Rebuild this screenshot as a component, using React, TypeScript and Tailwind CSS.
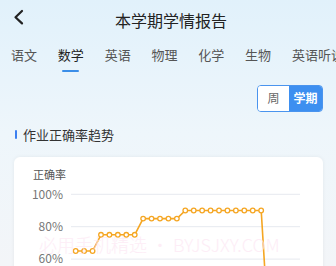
import React from "react";

const tabs = ["语文", "数学", "英语", "物理", "化学", "生物", "英语听说"];

// 正确率数据（%）
const values = [65, 65, 65, 75, 75, 75, 75, 75, 85, 85, 85, 85, 85, 90, 90, 90, 90, 90, 90, 90, 90, 90, 90, 5];

function Chart() {
  const x0 = 61.7;
  const step = 8.43;
  const yOf = (v: number) => 37.3 + ((100 - v) / 20) * 32.4;
  const pts = values.map((v, i) => [x0 + i * step, yOf(v)] as const);
  const d = pts.map(([x, y], i) => `${i ? "L" : "M"}${x.toFixed(1)} ${y.toFixed(1)}`).join(" ");
  const grid = [100, 80, 60];

  return (
    <svg width="309" height="200" className="block" style={{ fontFamily: "'Noto Sans CJK SC', 'Noto Sans', sans-serif" }}>
      <text x="19" y="22" fontSize="11" fill="#555">
        正确率
      </text>
      {grid.map((g) => (
        <g key={g}>
          <line x1="57" x2="286" y1={yOf(g)} y2={yOf(g)} stroke="#e6e9ef" strokeWidth="1" />
          <text x="49" y={yOf(g) + 4.3} fontSize="12" fill="#777" textAnchor="end">
            {g}%
          </text>
        </g>
      ))}
      <line x1="57" x2="286" y1={yOf(40)} y2={yOf(40)} stroke="#e6e9ef" strokeWidth="1" />
      <path d={d} fill="none" stroke="#f5a623" strokeWidth="1.6" strokeLinejoin="round" />
      {pts.map(([x, y], i) => (
        <circle key={i} cx={x} cy={y} r="2.3" fill="#fff" stroke="#f5a623" strokeWidth="1.3" />
      ))}
    </svg>
  );
}

export default function App() {
  return (
    <div
      className="relative h-[266px] w-[336px] overflow-hidden bg-gradient-to-b from-[#e1f1fb] via-[#eef6fb] to-[#f3f5f8] text-[#333]"
      style={{ fontFamily: "'Noto Sans CJK SC', 'Noto Sans', sans-serif" }}
    >
      {/* 顶栏 */}
      <div className="relative flex h-[39px] items-center justify-center">
        <svg className="absolute left-[12px] top-[9px]" width="14" height="16" viewBox="0 0 14 16">
          <path d="M10 2 L3.5 8.2 L10 14.4" fill="none" stroke="#222" strokeWidth="2.2" strokeLinecap="round" strokeLinejoin="round" />
        </svg>
        <div className="ml-[6px] text-[16px] leading-[20px] text-[#222]">本学期学情报告</div>
      </div>

      {/* 科目 */}
      <div className="mt-[6.5px] flex gap-[20.8px] whitespace-nowrap pl-[11px]">
        {tabs.map((t, i) => (
          <div key={t} className="flex flex-col items-center">
            <div className={`text-[13px] leading-[18px] ${i === 1 ? "text-[#222]" : "text-[#555]"}`}>{t}</div>
            {i === 1 && <div className="mt-[6.6px] h-[2px] w-[17px] rounded-full bg-[#3b8ee8]" />}
          </div>
        ))}
      </div>

      {/* 周 / 学期 */}
      <div className="mt-[12.7px] flex justify-end pr-[13px]">
        <div className="flex h-[27px] w-[66px] overflow-hidden rounded-[4px] border border-[#4a94ee] text-[12px]">
          <div className="flex w-[31px] items-center justify-center bg-white text-[#666]">周</div>
          <div className="flex flex-1 items-center justify-center bg-[#3d8ff0] font-bold text-white">学期</div>
        </div>
      </div>

      {/* 标题 */}
      <div className="mt-[14px] flex items-center gap-[6px] pl-[15px]">
        <div className="h-[9px] w-[2px] rounded-full bg-[#3b7ff0]" />
        <div className="text-[13px] leading-[18px] text-[#333]">作业正确率趋势</div>
      </div>

      {/* 图表卡片 */}
      <div className="mx-[14px] mt-[13px] h-[200px] w-[309px] rounded-[6px] bg-white shadow-[0_0_4px_rgba(0,0,0,0.06)]">
        <Chart />
      </div>

      <div className="pointer-events-none absolute left-[39px] top-[233px] whitespace-nowrap text-[18px] font-light leading-[22px] text-[#fde6f3] opacity-70">
        必用手机精选 • BYJSJXY.COM
      </div>
    </div>
  );
}
